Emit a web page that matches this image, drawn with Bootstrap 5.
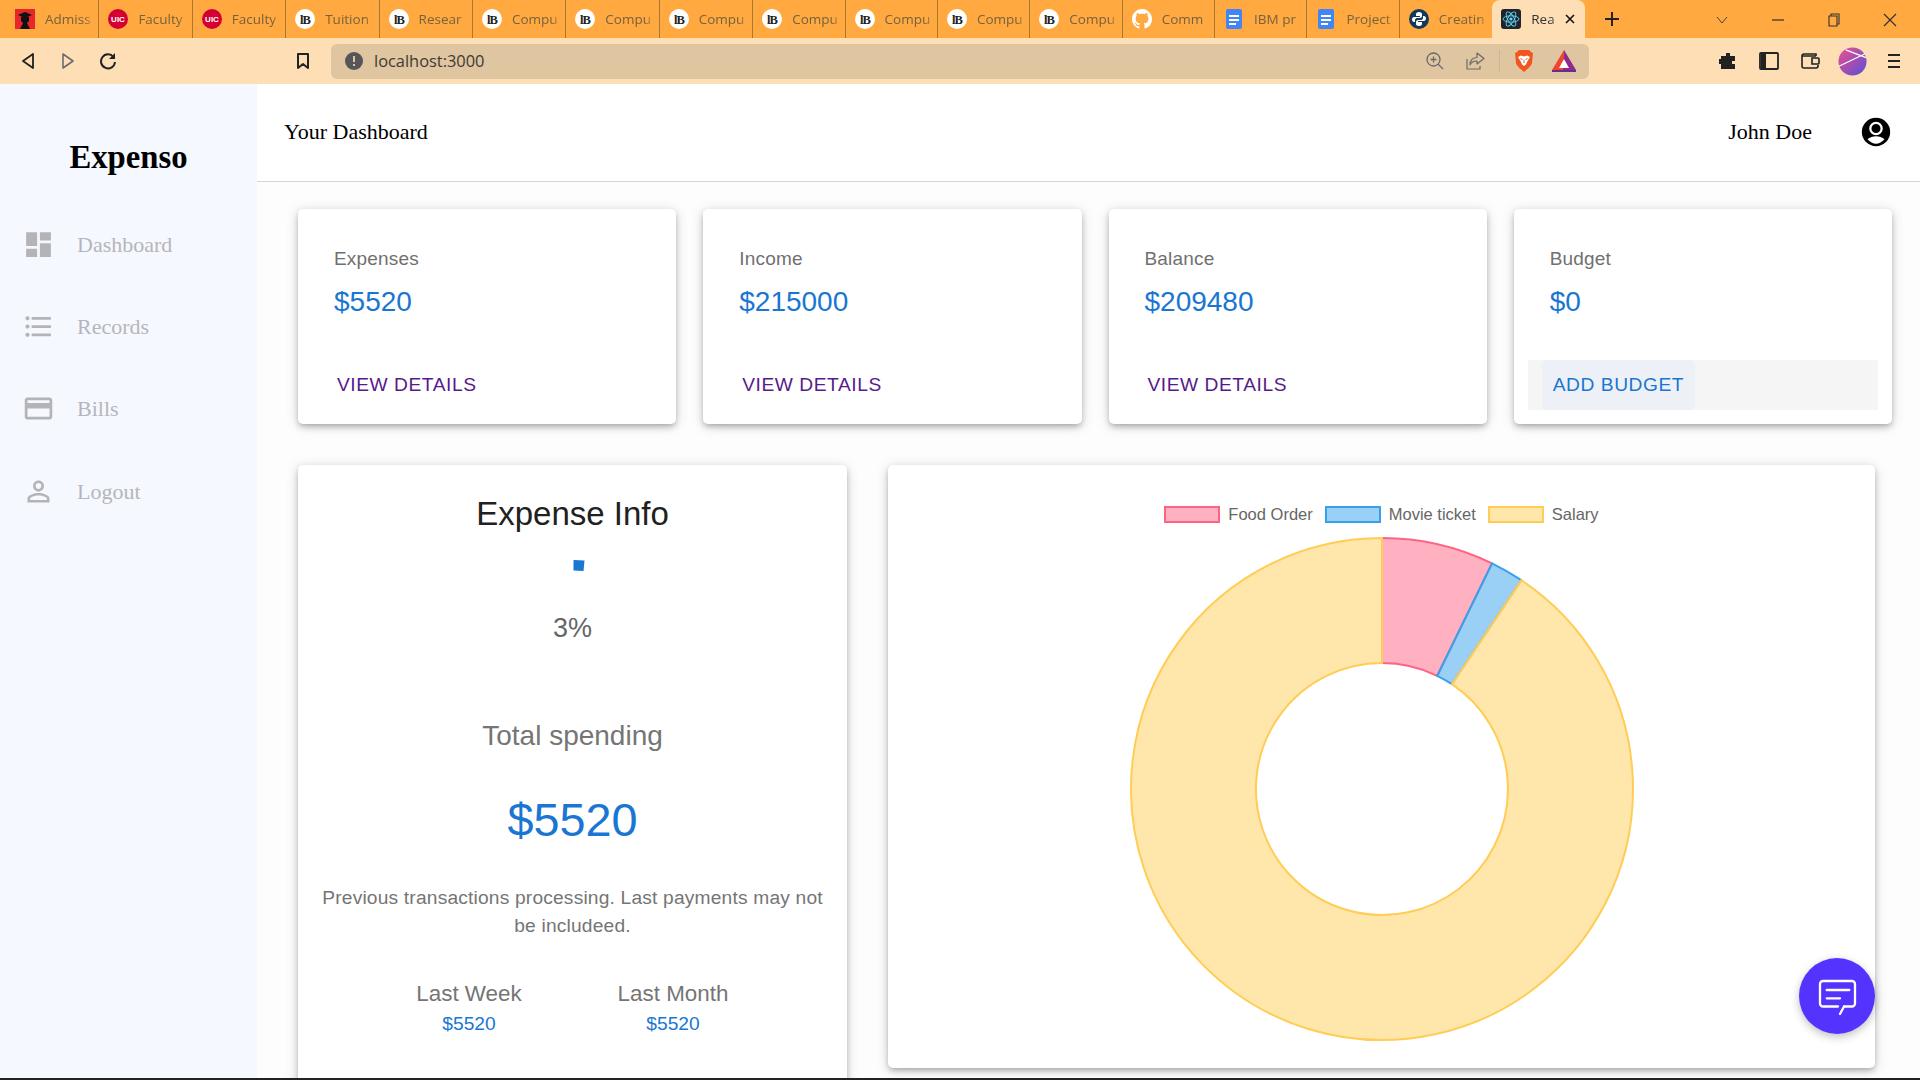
<!DOCTYPE html>
<html lang="en">
<head>
  <meta charset="UTF-8">
  <meta name="viewport" content="width=device-width, initial-scale=1.0">
  <title>Expenso</title>
  <link href="https://cdn.jsdelivr.net/npm/bootstrap@5.3.0/dist/css/bootstrap.min.css" rel="stylesheet">
  <style>
    html, body { height: 100%; overflow: hidden; }
    body { background: #fdfdfd; font-family: "Liberation Sans", Arial, sans-serif; }
    .page-wrap { height: 1080px; }

    /* browser chrome */
    .tab-strip { height: 38px; flex: none; background: #ffa940; padding-left: 6px; font-family: "Open Sans", sans-serif; font-size: 13.5px; }
    .brw-tab { width: 93.4px; height: 38px; padding-left: 9px; border-right: 1px solid #a7782f; flex: none; }
    .brw-tab:nth-child(n+9) { width: 92.4px; }
    .brw-tab.no-line { border-right-color: transparent; }
    .brw-tab svg { flex: none; width: 20px; height: 20px; }
    .tab-title { margin-left: 10px; width: 50px; overflow: hidden; white-space: nowrap; color: #76623f; -webkit-mask-image: linear-gradient(to right, #000 80%, transparent); mask-image: linear-gradient(to right, #000 80%, transparent); }
    .brw-tab.active-tab { width: 93px; background: #fedfb5; border-radius: 8px 8px 0 0; border-right: 0; }
    .active-tab .tab-title { width: 26px; color: #333; }
    .brw-tab .tab-close { margin-left: 7px; width: 12px; height: 12px; }
    .tab-new { margin-left: 19px; }
    .win-btns { margin-left: auto; padding-right: 2px; }
    .win-slot { width: 56px; }

    .tool-bar { height: 46px; flex: none; background: #fedfb5; }
    .tool-slot { width: 40px; height: 35px; flex: none; }
    .bookmark-slot { margin-left: 155px; }
    .url-bar { width: 1258px; height: 35px; flex: none; margin-left: 8px; background: #dfc5a0; border-radius: 6px; padding: 0 5px 0 14px; font-family: "Open Sans", sans-serif; font-size: 16.4px; color: #3e3a33; }
    .url-text { margin-left: 3px; }
    .url-sep { width: 1px; height: 22px; background: #cfb48e; margin: 0 4px; }
    .tool-right { margin-left: 118px; }
    .tool-wide { width: 41px; }
    .prof-slot { margin-left: 2px; }

    /* sidebar */
    .side-nav { width: 257px; background: #f5f8ff; flex: none; font-family: "Liberation Serif", "Times New Roman", serif; }
    .brand-name { font-size: 32.7px; font-weight: 700; line-height: 40px; margin: 53px 0 26px; text-align: center; color: #000; }
    .side-item { height: 82.4px; padding-left: 22px; font-size: 22px; color: #b6b6ba; }
    .side-item svg { width: 33px; height: 33px; fill: #b4b4b8; margin-right: 22px; }

    /* header */
    .top-head { height: 98px; border-bottom: 1px solid #d6d6d6; padding: 0 27px 2px; background: #fff; font-family: "Liberation Serif", "Times New Roman", serif; font-size: 22px; color: #000; }
    .head-name { margin-right: 47px; }

    /* cards */
    .soft-card { background: #fff; border: 0; border-radius: 5px; box-shadow: 0 3px 6px -1px rgba(0,0,0,.3), 0 2px 14px rgba(0,0,0,.14); }
    .stat-grid { display: grid; grid-template-columns: repeat(4, 378.25px); gap: 27px; padding: 27px 0 0 41px; }
    .stat-box { height: 215px; padding: 37px 14px 14px; }
    .stat-label { font-size: 19px; letter-spacing: .00938em; line-height: 26px; color: #707070; padding-left: 22px; }
    .stat-value { font-size: 28px; line-height: 36px; color: #1976d2; padding-left: 22px; margin-top: 12px; }
    .stat-actions { height: 50px; margin-top: 40px; }
    .stat-actions.on-hover { background: #f5f5f6; }
    .stat-link { display: inline-block; height: 50px; line-height: 50px; padding: 0 11px; margin-left: 14px; font-size: 19.2px; letter-spacing: .02857em; color: #561a8b; text-decoration: none; border-radius: 5px; }
    .stat-link.is-blue { color: #1976d2; background: #edf1f7; }

    .lower-grid { display: grid; grid-template-columns: 549px 987px; gap: 41px; padding: 41px 0 0 41px; align-items: start; }
    .info-box { height: 700px; padding-top: 29px; text-align: center; }
    .info-title { font-size: 33px; line-height: 40px; color: #212121; }
    .info-gauge { display: block; margin: 12px auto 0; width: 40px; height: 40px; }
    .info-pct { font-size: 27px; line-height: 36px; color: #666; margin-top: 24px; }
    .info-total { font-size: 28px; line-height: 36px; color: #757575; margin-top: 72px; }
    .info-amount { font-size: 46.8px; line-height: 56px; color: #1976d2; margin-top: 38px; }
    .info-note { font-size: 19.2px; letter-spacing: .00938em; line-height: 28px; color: #757575; margin: 36px auto 0; width: 515px; }
    .info-cols { margin-top: 39px; padding-right: 3px; }
    .info-col { width: 204px; }
    .col-label { font-size: 22.4px; line-height: 30px; color: #757575; }
    .col-value { font-size: 19.2px; line-height: 26px; color: #1976d2; margin-top: 2px; }

    .chart-box { height: 603px; padding-top: 41px; }
    .chart-legend { height: 17px; font-size: 16.5px; color: #666; gap: 12px; }
    .swatch { display: inline-block; width: 56px; height: 17px; border: 2px solid; margin-right: 8px; }
    .sw-pink { background: rgba(255,99,132,.5); border-color: #ff6384; }
    .sw-blue { background: rgba(54,162,235,.5); border-color: #36a2eb; }
    .sw-yellow { background: rgba(255,205,86,.5); border-color: #ffcd56; }
    .donut { display: block; margin: 11px auto 0; width: 510px; height: 510px; }

    .chat-fab { position: absolute; left: 1799px; top: 958px; width: 76px; height: 76px; border-radius: 50%; background: #5533ff; box-shadow: 0 3px 8px rgba(0,0,0,.25); }
    .bottom-line { height: 2px; background: #222; flex: none; }
    .app-area { flex: 1 1 0; min-height: 0; }
  </style>
</head>
<body>

<!-- shared favicons -->
<svg class="d-none">
  <symbol id="favLb" viewBox="0 0 20 20"><circle cx="10" cy="10" r="10" fill="#fff"/><text x="10" y="14.500" text-anchor="middle" font-family="Liberation Serif" font-size="12.500" font-weight="700" fill="#222" letter-spacing="-1">lB</text></symbol>
  <symbol id="favUic" viewBox="0 0 20 20"><circle cx="10" cy="10" r="10" fill="#d50032"/><text x="10" y="13" text-anchor="middle" font-family="Liberation Sans" font-size="8" font-weight="700" fill="#fff">UIC</text></symbol>
  <symbol id="favDoc" viewBox="0 0 20 20"><rect x="2" width="16" height="20" rx="2" fill="#4285f4"/><path d="M5 6h10v2H5zM5 10h10v2H5zM5 14h7v2H5z" fill="#fff"/></symbol>
</svg>

<div class="page-wrap d-flex flex-column position-relative">

  <!-- tabs -->
  <div class="tab-strip d-flex align-items-center">
    <div class="brw-tab d-flex align-items-center">
      <svg viewBox="0 0 20 20"><rect width="20" height="20" fill="#e5262b"/><path d="M3 6l7-3 7 3-7 3z" fill="#111"/><path d="M6 8h8v4l-2 2 3 6H5l3-6-2-2z" fill="#111"/></svg>
      <span class="tab-title">Admiss</span>
    </div>
    <div class="brw-tab d-flex align-items-center"><svg><use href="#favUic"/></svg><span class="tab-title">Faculty</span></div>
    <div class="brw-tab d-flex align-items-center"><svg><use href="#favUic"/></svg><span class="tab-title">Faculty</span></div>
    <div class="brw-tab d-flex align-items-center"><svg><use href="#favLb"/></svg><span class="tab-title">Tuition</span></div>
    <div class="brw-tab d-flex align-items-center"><svg><use href="#favLb"/></svg><span class="tab-title">Resear</span></div>
    <div class="brw-tab d-flex align-items-center"><svg><use href="#favLb"/></svg><span class="tab-title">Compu</span></div>
    <div class="brw-tab d-flex align-items-center"><svg><use href="#favLb"/></svg><span class="tab-title">Compu</span></div>
    <div class="brw-tab d-flex align-items-center"><svg><use href="#favLb"/></svg><span class="tab-title">Compu</span></div>
    <div class="brw-tab d-flex align-items-center"><svg><use href="#favLb"/></svg><span class="tab-title">Compu</span></div>
    <div class="brw-tab d-flex align-items-center"><svg><use href="#favLb"/></svg><span class="tab-title">Compu</span></div>
    <div class="brw-tab d-flex align-items-center"><svg><use href="#favLb"/></svg><span class="tab-title">Compu</span></div>
    <div class="brw-tab d-flex align-items-center"><svg><use href="#favLb"/></svg><span class="tab-title">Compu</span></div>
    <div class="brw-tab d-flex align-items-center">
      <svg viewBox="0 0 16 16"><path fill="#fff" d="M8 0C3.58 0 0 3.58 0 8c0 3.54 2.29 6.53 5.47 7.59.4.07.55-.17.55-.38 0-.19-.01-.82-.01-1.49-2.01.37-2.53-.49-2.69-.94-.09-.23-.48-.94-.82-1.13-.28-.15-.68-.52-.01-.53.63-.01 1.08.58 1.23.82.72 1.21 1.87.87 2.33.66.07-.52.28-.87.51-1.07-1.78-.2-3.64-.89-3.64-3.95 0-.87.31-1.59.82-2.15-.08-.2-.36-1.02.08-2.12 0 0 .67-.21 2.2.82.64-.18 1.32-.27 2-.27.68 0 1.36.09 2 .27 1.53-1.04 2.2-.82 2.2-.82.44 1.1.16 1.92.08 2.12.51.56.82 1.27.82 2.15 0 3.07-1.87 3.75-3.65 3.95.29.25.54.73.54 1.48 0 1.07-.01 1.93-.01 2.2 0 .21.15.46.55.38A8.013 8.013 0 0016 8c0-4.42-3.58-8-8-8z"/></svg>
      <span class="tab-title">Comm</span>
    </div>
    <div class="brw-tab d-flex align-items-center"><svg><use href="#favDoc"/></svg><span class="tab-title">IBM pr</span></div>
    <div class="brw-tab d-flex align-items-center"><svg><use href="#favDoc"/></svg><span class="tab-title">Project</span></div>
    <div class="brw-tab no-line d-flex align-items-center">
      <svg viewBox="0 0 20 20"><circle cx="10" cy="10" r="10" fill="#12395b"/><path d="M10 3c-2 0-3 1-3 2v2h4v1H5c-1 0-2 1-2 2.500S4 13 5 13h1v-2c0-1 1-2 2-2h3c1 0 2-1 2-2V5c0-1-1-2-3-2z" fill="#fff"/><path d="M10 17c2 0 3-1 3-2v-2H9v-1h6c1 0 2-1 2-2.500S16 7 15 7h-1v2c0 1-1 2-2 2H9c-1 0-2 1-2 2v2c0 1 1 2 3 2z" fill="#fff"/></svg>
      <span class="tab-title">Creatin</span>
    </div>
    <div class="brw-tab active-tab d-flex align-items-center">
      <svg viewBox="0 0 20 20"><rect width="20" height="20" rx="3" fill="#20232a"/><g fill="none" stroke="#61dafb" stroke-width=".9"><ellipse cx="10" cy="10" rx="8" ry="3.200"/><ellipse cx="10" cy="10" rx="8" ry="3.200" transform="rotate(60 10 10)"/><ellipse cx="10" cy="10" rx="8" ry="3.200" transform="rotate(120 10 10)"/></g><circle cx="10" cy="10" r="1.600" fill="#61dafb"/></svg>
      <span class="tab-title">Rea</span>
      <svg class="tab-close" viewBox="0 0 12 12"><path d="M2 2l8 8M10 2l-8 8" stroke="#111" stroke-width="1.600"/></svg>
    </div>
    <svg class="tab-new" width="16" height="16" viewBox="0 0 16 16"><path d="M8 1v14M1 8h14" stroke="#222" stroke-width="2"/></svg>
    <div class="win-btns d-flex align-items-center">
      <div class="win-slot text-center"><svg width="12" height="8" viewBox="0 0 12 8"><path d="M1 1l5 6 5-6" fill="none" stroke="#444" stroke-width="1"/></svg></div>
      <div class="win-slot text-center"><svg width="12" height="12" viewBox="0 0 12 12"><path d="M0 6h12" stroke="#333" stroke-width="1.200"/></svg></div>
      <div class="win-slot text-center"><svg width="13" height="14" viewBox="0 0 13 14"><path d="M3 3V1h8v10H9M1 3h8v10H1z" fill="none" stroke="#333" stroke-width="1.100"/></svg></div>
      <div class="win-slot text-center"><svg width="14" height="14" viewBox="0 0 14 14"><path d="M1 1l12 12M13 1L1 13" stroke="#333" stroke-width="1.200"/></svg></div>
    </div>
  </div>

  <!-- toolbar -->
  <div class="tool-bar d-flex align-items-center ps-2">
    <div class="tool-slot d-flex align-items-center justify-content-center"><svg width="14" height="18" viewBox="0 0 14 18"><path d="M12 2L2 9l10 7z" fill="none" stroke="#222" stroke-width="1.800" stroke-linejoin="round"/></svg></div>
    <div class="tool-slot d-flex align-items-center justify-content-center"><svg width="14" height="18" viewBox="0 0 14 18"><path d="M2 2l10 7-10 7z" fill="none" stroke="#6c6a70" stroke-width="1.600" stroke-linejoin="round"/></svg></div>
    <div class="tool-slot d-flex align-items-center justify-content-center"><svg width="18" height="18" viewBox="0 0 18 18"><path d="M14.500 5A7 7 0 1 0 16 10" fill="none" stroke="#222" stroke-width="2"/><path d="M16 1v6h-6z" fill="#222"/></svg></div>
    <div class="tool-slot bookmark-slot d-flex align-items-center justify-content-center"><svg width="14" height="18" viewBox="0 0 14 18"><path d="M2 2h10v14l-5-4-5 4z" fill="none" stroke="#222" stroke-width="2" stroke-linejoin="round"/></svg></div>
    <div class="url-bar d-flex align-items-center">
      <svg width="18" height="18" viewBox="0 0 18 18" class="me-2"><circle cx="9" cy="9" r="9" fill="#55555a"/><path d="M8 4h2v6H8zM8 12h2v2H8z" fill="#dfc5a0"/></svg>
      <span class="url-text">localhost:3000</span>
      <div class="d-flex align-items-center ms-auto">
        <div class="tool-slot d-flex align-items-center justify-content-center"><svg width="20" height="20" viewBox="0 0 20 20"><circle cx="8.500" cy="8.500" r="6.500" fill="none" stroke="#6a6a6a" stroke-width="1.300"/><path d="M13 13l5 5M8.500 5.500v6M5.500 8.500h6" stroke="#6a6a6a" stroke-width="1.300"/></svg></div>
        <div class="tool-slot d-flex align-items-center justify-content-center"><svg width="20" height="20" viewBox="0 0 20 20"><path d="M12 2l7 5.500-7 5.500V10C8 10 6 11.500 5 14c0-5 3-7.500 7-7.500z M2 8v10h13v-3" fill="none" stroke="#6a6a6a" stroke-width="1.200" stroke-linejoin="round"/></svg></div>
        <div class="url-sep"></div>
        <div class="tool-slot d-flex align-items-center justify-content-center"><svg width="20" height="24" viewBox="0 0 20 24"><path d="M5 1h10l2 2 2 1-1 10c-1 4-6 7-8 9-2-2-7-5-8-9L1 4l2-1z" fill="#f1561f"/><path d="M4 8l3-1.500 3 1 3-1L16 8l-3 5-1 2.500-2 1.500-2-1.500L7 13z" fill="#fff"/><path d="M6.500 9.500l2 1M13.500 9.500l-2 1M10 11v3" stroke="#f1561f"/></svg></div>
        <div class="tool-slot d-flex align-items-center justify-content-center"><svg width="24" height="22" viewBox="0 0 24 22"><path d="M12 0l12 20H10z" fill="#8e2a8b"/><path d="M12 0L0 20h11z" fill="#f1442c"/><path d="M0 20h24v2H0z" fill="#662d91"/><path d="M12 9l5 9H7z" fill="#fff"/></svg></div>
      </div>
    </div>
    <div class="tool-slot tool-wide tool-right d-flex align-items-center justify-content-center"><svg width="18" height="18" viewBox="0 0 18 18"><path d="M7 1h4v3h5v5h-3v3h3v5H2v-5H0V7h2V4h5z" fill="#222"/></svg></div>
    <div class="tool-slot tool-wide d-flex align-items-center justify-content-center"><svg width="20" height="18" viewBox="0 0 20 18"><rect x="1" y="1" width="18" height="16" rx="1" fill="none" stroke="#222" stroke-width="1.800"/><path d="M2 2h5v14H2z" fill="#222"/></svg></div>
    <div class="tool-slot tool-wide d-flex align-items-center justify-content-center"><svg width="20" height="18" viewBox="0 0 20 18"><path d="M16 4V2H4a2 2 0 0 0-2 2v10a2 2 0 0 0 2 2h12a2 2 0 0 0 2-2v-1" fill="none" stroke="#222" stroke-width="1.600"/><path d="M2 4h14M12 6h6a1 1 0 0 1 1 1v4a1 1 0 0 1-1 1h-6z" fill="none" stroke="#222" stroke-width="1.600"/></svg></div>
    <div class="tool-slot tool-wide prof-slot d-flex align-items-center justify-content-center"><svg width="29" height="29" viewBox="0 0 30 30"><defs><linearGradient id="profGrad" x1="0" y1="0" x2="1" y2="1"><stop offset="0" stop-color="#ee4f8c"/><stop offset="1" stop-color="#5a4fd8"/></linearGradient></defs><circle cx="15" cy="15" r="14.500" fill="url(#profGrad)"/><path d="M1 20L28 7M8 3l21 8" stroke="#fff" stroke-width="1.200"/></svg></div>
    <div class="tool-slot tool-wide d-flex align-items-center justify-content-center"><svg width="12" height="16" viewBox="0 0 12 16"><path d="M0 2h12M0 8h12M0 14h12" stroke="#222" stroke-width="2"/></svg></div>
  </div>

  <!-- app -->
  <div class="app-area d-flex overflow-hidden">
    <nav class="side-nav">
      <div class="brand-name">Expenso</div>
      <div class="side-item d-flex align-items-center">
        <svg viewBox="0 0 24 24"><path d="M3 13h8V3H3v10zm0 8h8v-6H3v6zm10 0h8V11h-8v10zm0-18v6h8V3h-8z"/></svg>Dashboard
      </div>
      <div class="side-item d-flex align-items-center">
        <svg viewBox="0 0 24 24"><path d="M4 10.500c-.83 0-1.500.67-1.500 1.500s.67 1.500 1.500 1.500 1.500-.67 1.500-1.500-.67-1.500-1.500-1.500zm0-6c-.83 0-1.500.67-1.500 1.500S3.170 7.500 4 7.500 5.500 6.830 5.500 6 4.830 4.500 4 4.500zm0 12c-.83 0-1.500.68-1.500 1.500s.68 1.500 1.500 1.500 1.500-.68 1.500-1.500-.67-1.500-1.500-1.500zM7 19h14v-2H7v2zm0-6h14v-2H7v2zm0-8v2h14V5H7z"/></svg>Records
      </div>
      <div class="side-item d-flex align-items-center">
        <svg viewBox="0 0 24 24"><path d="M20 4H4c-1.110 0-1.990.89-1.990 2L2 18c0 1.110.89 2 2 2h16c1.110 0 2-.89 2-2V6c0-1.110-.89-2-2-2zm0 14H4v-6h16v6zm0-10H4V6h16v2z"/></svg>Bills
      </div>
      <div class="side-item d-flex align-items-center">
        <svg viewBox="0 0 24 24"><path d="M12 5.900c1.160 0 2.100.94 2.100 2.100s-.94 2.100-2.100 2.100S9.900 9.160 9.900 8s.94-2.100 2.100-2.100m0 9c2.970 0 6.100 1.460 6.100 2.100v1.100H5.900V17c0-.64 3.130-2.100 6.100-2.100M12 4C9.790 4 8 5.790 8 8s1.790 4 4 4 4-1.790 4-4-1.790-4-4-4zm0 9c-2.670 0-8 1.340-8 4v3h16v-3c0-2.660-5.330-4-8-4z"/></svg>Logout
      </div>
    </nav>

    <main class="flex-grow-1">
      <header class="top-head d-flex align-items-center justify-content-between">
        <span>Your Dashboard</span>
        <div class="d-flex align-items-center">
          <span class="head-name">John Doe</span>
          <svg width="34" height="34" viewBox="0 0 24 24"><circle cx="12" cy="12" r="10"/><circle cx="12" cy="9.500" r="4" fill="none" stroke="#fff" stroke-width="1.600"/><path d="M6 17.100C7.700 15.800 9.700 15 12 15s4.300.8 6 2.100C16.400 19 14 20.300 12 20.300S7.600 19 6 17.100z" fill="#fff"/></svg>
        </div>
      </header>

      <section class="stat-grid">
        <div class="card soft-card stat-box">
          <div class="stat-label">Expenses</div>
          <div class="stat-value">$5520</div>
          <div class="stat-actions"><a class="stat-link" href="#">VIEW DETAILS</a></div>
        </div>
        <div class="card soft-card stat-box">
          <div class="stat-label">Income</div>
          <div class="stat-value">$215000</div>
          <div class="stat-actions"><a class="stat-link" href="#">VIEW DETAILS</a></div>
        </div>
        <div class="card soft-card stat-box">
          <div class="stat-label">Balance</div>
          <div class="stat-value">$209480</div>
          <div class="stat-actions"><a class="stat-link" href="#">VIEW DETAILS</a></div>
        </div>
        <div class="card soft-card stat-box">
          <div class="stat-label">Budget</div>
          <div class="stat-value">$0</div>
          <div class="stat-actions on-hover"><a class="stat-link is-blue" href="#">ADD BUDGET</a></div>
        </div>
      </section>

      <section class="lower-grid">
        <div class="card soft-card info-box">
          <div class="info-title">Expense Info</div>
          <svg class="info-gauge" viewBox="0 0 40 40"><path d="M20.500 14l11 .5-1 10.500-10 -.5z" fill="#1976d2"/></svg>
          <div class="info-pct">3%</div>
          <div class="info-total">Total spending</div>
          <div class="info-amount">$5520</div>
          <div class="info-note">Previous transactions processing. Last payments may not be includeed.</div>
          <div class="info-cols d-flex justify-content-center">
            <div class="info-col">
              <div class="col-label">Last Week</div>
              <div class="col-value">$5520</div>
            </div>
            <div class="info-col">
              <div class="col-label">Last Month</div>
              <div class="col-value">$5520</div>
            </div>
          </div>
        </div>

        <div class="card soft-card chart-box">
          <div class="chart-legend d-flex justify-content-center align-items-center">
            <div class="d-flex align-items-center"><span class="swatch sw-pink"></span>Food Order</div>
            <div class="d-flex align-items-center"><span class="swatch sw-blue"></span>Movie ticket</div>
            <div class="d-flex align-items-center"><span class="swatch sw-yellow"></span>Salary</div>
          </div>
          <svg class="donut" viewBox="-255 -255 510 510" stroke-width="2">
            <path d="M0 -251A251 251 0 0 1 110 -225.600L55.200 -113.200A126 126 0 0 0 0 -126Z" fill="rgba(255,99,132,.5)" stroke="#ff6384"/>
            <path d="M110 -225.600A251 251 0 0 1 139.300 -208.800L69.900 -104.800A126 126 0 0 0 55.200 -113.200Z" fill="rgba(54,162,235,.5)" stroke="#36a2eb"/>
            <path d="M139.300 -208.800A251 251 0 1 1 0 -251L0 -126A126 126 0 1 0 69.900 -104.800Z" fill="rgba(255,205,86,.5)" stroke="#ffcd56"/>
          </svg>
        </div>
      </section>
    </main>
  </div>
  <div class="bottom-line"></div>

  <div class="chat-fab d-flex align-items-center justify-content-center">
    <svg width="40" height="38" viewBox="0 0 40 38"><path d="M27 29.500h8a3 3 0 0 0 3-3V7a3 3 0 0 0-3-3H6a3 3 0 0 0-3 3v19.500a3 3 0 0 0 3 3h15M27 29.500L23 37M9.700 13h22.600M9.700 21.300H23" fill="none" stroke="#fff" stroke-width="2.300" stroke-linecap="round" stroke-linejoin="round"/></svg>
  </div>
</div>

<script src="https://cdn.jsdelivr.net/npm/bootstrap@5.3.0/dist/js/bootstrap.bundle.min.js"></script>
</body>
</html>
